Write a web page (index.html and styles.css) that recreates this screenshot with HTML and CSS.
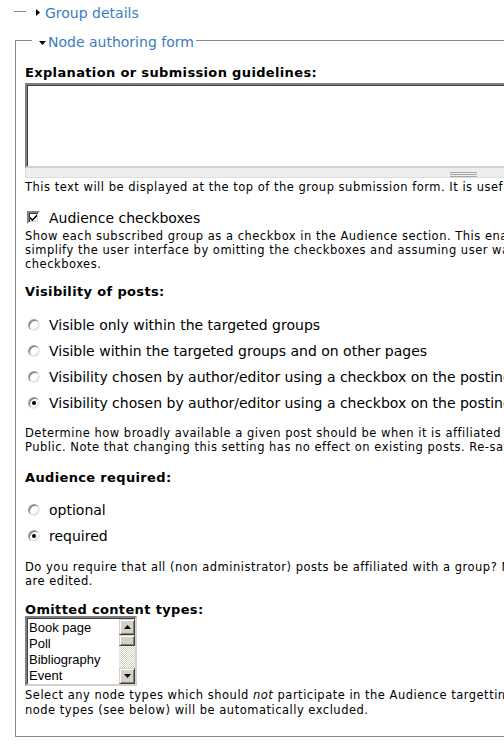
FILE: index.html
```html
<!DOCTYPE html>
<html>
<head>
<meta charset="utf-8">
<link rel="stylesheet" href="styles.css">
</head>
<body>
<div class="page">
  <fieldset class="fs collapsed">
    <legend class="lg lg1"><a href="#"><svg class="tri" width="4" height="7" viewBox="0 0 4 7"><path d="M0 0L4 3.5L0 7Z" fill="#000"/></svg>Group details</a></legend>
  </fieldset>

  <fieldset class="fs open">
    <legend class="lg lg2"><a href="#"><svg class="tri tri-down" width="7" height="4" viewBox="0 0 7 4"><path d="M0 0H7L3.5 4Z" fill="#000"/></svg>Node authoring form</a></legend>

    <div class="item item-first">
      <label class="title">Explanation or submission guidelines:</label>
      <textarea class="ta" rows="5"></textarea>
      <div class="grippie"><span class="grip"></span></div>
      <div class="desc">This text will be displayed at the top of the group submission form. It is useful for helping or instructing your users.</div>
    </div>

    <div class="item item-check">
      <div class="opt"><span class="cb"><svg width="9" height="9" viewBox="0 0 9 9"><path d="M1 3.5L3.3 6L8 1.2V3.4L3.3 8.2L1 5.7Z" fill="#000"/></svg></span><span class="opt-label">Audience checkboxes</span></div>
      <div class="desc desc-tight">Show each subscribed group as a checkbox in the Audience section. This enables user to place her post into multiple groups. If unchecked,<br>simplify the user interface by omitting the checkboxes and assuming user wants to post into the current group. Group administrators always see<br>checkboxes.</div>
    </div>

    <div class="item item-vis">
      <label class="title">Visibility of posts:</label>
      <div class="radios">
        <div class="opt"><span class="rd"></span><span class="opt-label">Visible only within the targeted groups</span></div>
        <div class="opt"><span class="rd"></span><span class="opt-label">Visible within the targeted groups and on other pages</span></div>
        <div class="opt"><span class="rd"></span><span class="opt-label">Visibility chosen by author/editor using a checkbox on the posting form. Checkbox defaults to Public.</span></div>
        <div class="opt"><span class="rd on"></span><span class="opt-label">Visibility chosen by author/editor using a checkbox on the posting form. Checkbox defaults to Private.</span></div>
      </div>
      <div class="desc desc-after">Determine how broadly available a given post should be when it is affiliated with a group. OG admins always see the checkbox for making a post<br>Public. Note that changing this setting has no effect on existing posts. Re-save those posts to acquire this new setting.</div>
    </div>

    <div class="item item-aud">
      <label class="title">Audience required:</label>
      <div class="radios">
        <div class="opt"><span class="rd"></span><span class="opt-label">optional</span></div>
        <div class="opt"><span class="rd on"></span><span class="opt-label">required</span></div>
      </div>
      <div class="desc desc-after">Do you require that all (non administrator) posts be affiliated with a group? Note that changing this setting will affect existing posts when they<br>are edited.</div>
    </div>

    <div class="item">
      <label class="title title-list">Omitted content types:</label>
      <div class="listbox">
        <ul class="items">
          <li>Book page</li>
          <li>Poll</li>
          <li>Bibliography</li>
          <li>Event</li>
        </ul>
        <div class="sb">
          <span class="sbtn"><svg width="7" height="4" viewBox="0 0 7 4"><path d="M3.5 0L7 4H0Z" fill="#000"/></svg></span>
          <span class="thumb"></span>
          <span class="track"></span>
          <span class="sbtn"><svg width="7" height="4" viewBox="0 0 7 4"><path d="M0 0H7L3.5 4Z" fill="#000"/></svg></span>
        </div>
      </div>
      <div class="desc desc-list">Select any node types which should <em>not</em> participate in the Audience targetting system. Note that group<br>node types (see below) will be automatically excluded.</div>
    </div>
  </fieldset>
</div>
</body>
</html>
```
FILE: styles.css
```css
html, body {
  margin: 0;
  padding: 0;
  background: #fff;
}
body {
  font-family: "DejaVu Sans", Verdana, sans-serif;
  color: #000;
  overflow: hidden;
  width: 504px;
  height: 751px;
}
.page {
  width: 960px;
  padding-top: 2px;
}
.fs {
  margin: 0;
  min-width: 0;
}
.collapsed {
  margin-left: 14px;
  width: fit-content;
  border: 0;
  border-top: 1px solid #888;
  padding: 0 0 0 12px;
  height: 0;
}
.open {
  margin-left: 15px;
  margin-top: 9px;
  width: 877px;
  border: 1px solid #888;
  padding: 0 9px 18px 9px;
}
.lg {
  font-size: 14px;
  line-height: 18px;
  padding: 0 2px 0 0;
}
.lg a {
  color: #3b7cc0;
  text-decoration: none;
  display: inline-flex;
  align-items: center;
}
.lg1 {
  padding-left: 10px;
}
.lg2 {
  margin-left: 7px;
  padding-left: 7px;
}
.tri {
  margin-right: 5px;
  display: block;
}
.tri-down {
  margin-right: 2px;
  margin-top: 2px;
}
.item {
  margin-top: 14px;
}
.item-first {
  margin-top: 14px;
}
.item-check {
  margin-top: 16px;
}
.item-vis {
  margin-top: 13px;
}
.item-aud {
  margin-top: 16px;
}
.title {
  display: block;
  font-weight: bold;
  font-size: 13px;
  letter-spacing: 0.35px;
  line-height: 16px;
  margin-bottom: 2px;
}
.title-list {
  margin-bottom: -2px;
}
.ta {
  display: block;
  box-sizing: border-box;
  width: 877px;
  height: 85px;
  margin: 0;
  padding: 0;
  resize: none;
  background: #fff;
  border-style: solid;
  border-width: 2px;
  border-color: #808080 #d4d0c8 #d4d0c8 #808080;
  box-shadow: inset 1px 1px 0 #404040;
  outline: none;
}
.grippie {
  box-sizing: border-box;
  height: 10px;
  background: #eee;
  border: 1px solid #ddd;
  border-top: 0;
  display: flex;
  justify-content: center;
  padding-top: 4px;
}
.grip {
  width: 27px;
  height: 5px;
  background: repeating-linear-gradient(to bottom, #a8a8a8 0 1px, transparent 1px 2px);
}
.desc {
  font-size: 11.5px;
  letter-spacing: 0.5px;
  line-height: 14px;
  white-space: nowrap;
  margin-top: 2px;
}
.desc-tight {
  margin-top: 3px;
}
.desc-after {
  margin-top: 15px;
}
.item-aud .desc-after {
  margin-top: 16px;
}
.desc-list {
  margin-top: 2px;
  line-height: 15px;
}
.radios {
  margin-top: 17px;
  display: flex;
  flex-direction: column;
  gap: 10px;
}
.item-aud .radios {
  margin-top: 16px;
}
.opt {
  display: flex;
  align-items: center;
  height: 16px;
  font-size: 14px;
  line-height: 16px;
  white-space: nowrap;
}
.opt-label {
  margin-left: 10px;
}
.cb {
  box-sizing: border-box;
  width: 13px;
  height: 13px;
  margin-left: 2px;
  background: #fff;
  border-style: solid;
  border-width: 2px;
  border-color: #808080 #fff #fff #808080;
  box-shadow: inset 1px 1px 0 #404040, inset -1px -1px 0 #d4d0c8;
  display: flex;
  align-items: center;
  justify-content: center;
}
.cb svg {
  display: block;
}
.opt .cb + .opt-label {
  margin-left: 9px;
}
.rd {
  box-sizing: border-box;
  width: 12px;
  height: 12px;
  margin-left: 3px;
  border-radius: 50%;
  background: #fff;
  border: 1px solid;
  border-color: #a0a0a0 #ececec #ececec #a0a0a0;
  box-shadow: inset 1px 1px 0 #777, inset -1px -1px 0 #dcdcdc;
  position: relative;
}
.rd + .opt-label {
  margin-left: 9px;
}
.rd.on::after {
  content: "";
  position: absolute;
  left: 3px;
  top: 3px;
  width: 4px;
  height: 4px;
  border-radius: 50%;
  background: #000;
}
.listbox {
  box-sizing: border-box;
  width: 112px;
  height: 70px;
  border-style: solid;
  border-width: 2px;
  border-color: #808080 #d4d0c8 #d4d0c8 #808080;
  box-shadow: inset 1px 1px 0 #404040;
  display: flex;
  background: #fff;
}
.items {
  list-style: none;
  margin: 0;
  padding: 2px 0 0 2px;
  flex: 1;
  font-family: "Liberation Sans", Arial, sans-serif;
  font-size: 13px;
  line-height: 16px;
}
.sb {
  width: 16px;
  display: flex;
  flex-direction: column;
  margin: 1px 0 0 0;
}
.sbtn, .thumb {
  box-sizing: border-box;
  width: 16px;
  background: #d4d0c8;
  border-style: solid;
  border-width: 1px;
  border-color: #d4d0c8 #404040 #404040 #d4d0c8;
  box-shadow: inset 1px 1px 0 #fff, inset -1px -1px 0 #808080;
  display: flex;
  align-items: center;
  justify-content: center;
}
.sbtn {
  height: 16px;
}
.sbtn svg {
  display: block;
}
.thumb {
  height: 11px;
}
.track {
  flex: 1;
  background: repeating-conic-gradient(#fff 0 25%, #d4d0c8 0 50%) 0 0 / 2px 2px;
}
```
